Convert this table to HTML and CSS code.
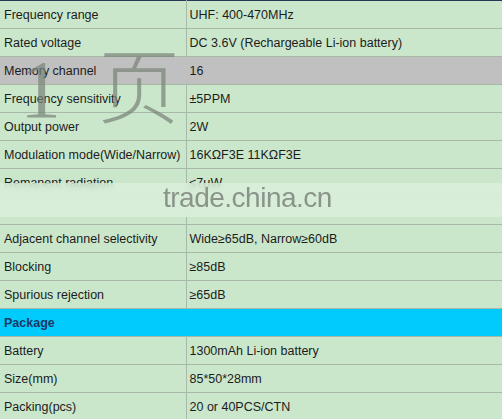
FILE: index.html
```
<!DOCTYPE html>
<html lang="en">
  <head>
    <meta charset="UTF-8" />
    <title>Specifications</title>
    <link rel="stylesheet" href="styles.css">
  </head>
  <body>
    <div class="sheet">
      <table class="spec">
        <tr><td class="key">Frequency range</td><td>UHF: 400-470MHz</td></tr>
        <tr><td class="key">Rated voltage</td><td>DC 3.6V (Rechargeable Li-ion battery)</td></tr>
        <tr class="grey"><td class="key">Memory channel</td><td>16</td></tr>
        <tr><td class="key">Frequency sensitivity</td><td>±5PPM</td></tr>
        <tr><td class="key">Output power</td><td>2W</td></tr>
        <tr><td class="key">Modulation mode(Wide/Narrow)</td><td>16KΩF3E 11KΩF3E</td></tr>
        <tr><td class="key">Remanent radiation</td><td>≤7μW</td></tr>
        <tr><td class="key"></td><td></td></tr>
        <tr><td class="key">Adjacent channel selectivity</td><td>Wide≥65dB, Narrow≥60dB</td></tr>
        <tr><td class="key">Blocking</td><td>≥85dB</td></tr>
        <tr><td class="key">Spurious rejection</td><td>≥65dB</td></tr>
        <tr class="section"><td colspan="2">Package</td></tr>
        <tr><td class="key">Battery</td><td>1300mAh Li-ion battery</td></tr>
        <tr><td class="key">Size(mm)</td><td>85*50*28mm</td></tr>
        <tr><td class="key">Packing(pcs)</td><td>20 or 40PCS/CTN</td></tr>
      </table>

      <!-- watermarks laid over the table -->
      <div class="mark-page"><span class="one">1</span><span class="ye">页</span></div>
      <div class="mark-band"><span>trade.china.cn</span></div>
    </div>
  </body>
</html>
```
FILE: styles.css
```
body {
  margin: 0;
  font-family: "Liberation Sans", Arial, sans-serif;
  background: #cce8cc;
  overflow: hidden;
}

.sheet {
  position: relative;
  width: 502px;
  height: 419px;
  overflow: hidden;
}

.spec {
  width: 502px;
  border-collapse: collapse;
  border-top: 1px solid #27375a;
  background: #cbe7cb;
  font-size: 12.5px;
  color: #1c1c1c;
}

.spec td {
  height: 28px;
  padding: 0 0 0 3px;
  border-bottom: 1px solid #a9b9a9;
  white-space: nowrap;
  box-sizing: border-box;
}

.spec td.key {
  width: 186px;
  padding-left: 4px;
  border-right: 1px solid #a9b9a9;
}

.spec .grey td {
  background: #c0c0c0;
  border-right-color: #c0c0c0;
}

.spec .section td {
  background: #00cbfb;
  border-top: 1px solid #9fe8f4;
  color: #1b3768;
  font-weight: bold;
  padding-left: 4px;
}

/* big "1页" stamp */
.mark-page {
  position: absolute;
  left: 20px;
  top: 22px;
  color: rgba(120, 132, 120, 0.72);
  pointer-events: none;
  display: flex;
  align-items: baseline;
}

.mark-page .one {
  font-family: "Liberation Serif", serif;
  font-size: 82px;
  width: 78px;
}

.mark-page .ye {
  font-family: "Noto Sans CJK SC", sans-serif;
  font-weight: 200;
  font-size: 82px;
}

/* blurred site band */
.mark-band {
  position: absolute;
  left: 0;
  top: 183px;
  width: 502px;
  height: 34px;
  background: rgba(220, 240, 220, 0.75);
  backdrop-filter: blur(3px);
}

.mark-band span {
  position: absolute;
  left: 163px;
  top: -1px;
  font-size: 28px;
  color: #8a948a;
  letter-spacing: -0.5px;
}
```
